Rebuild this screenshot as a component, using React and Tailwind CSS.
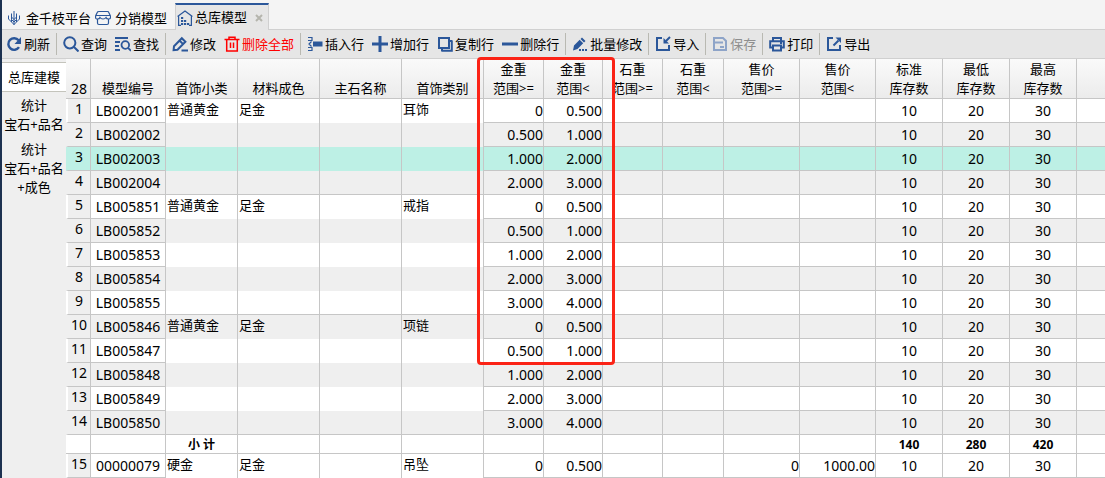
import React from "react";

const BLUE = "#2b579a";

// All icons share a 16px box
const Icon = ({ children, color = BLUE, width = 2 }) => (
  <svg
    viewBox="0 0 16 16"
    className="h-4 w-4 shrink-0"
    fill="none"
    stroke={color}
    strokeWidth={width}
    aria-hidden="true"
  >
    {children}
  </svg>
);

const BranchIcon = () => (
  <Icon width={1}>
    <path d="M8 1v14M5.500 3.500v3.500L8 9.500 10.500 7v-3.500M5.500 7v2.500L8 12l2.500-2.500V7M2.500 5.500V9l3 3M13.500 5.500V9l-3 3M5.500 9.500V12L8 14.500l2.500-2.500V9.500" />
  </Icon>
);

const ShopIcon = () => (
  <Icon width={1.2}>
    <path d="M4 1.500h8.500q1 0 1.300 1L15.500 6v1.500q0 1.500-2 1.500t-2.500-1.500Q10 9 8 9T5 7.500Q4.500 9 2.500 9T.6 7.500V6l1.600-3.500q.3-1 1.800-1zM1 5.500h14M2.500 9v4q0 1.500 1.500 1.500h8q1.500 0 1.500-1.500V9" />
  </Icon>
);

const WarehouseIcon = () => (
  <Icon width={1.2}>
    <path d="M.6 6.500 8 1l7.400 5.500M1.600 6v9.400H4M14.400 6v9.400H12" />
    <path d="M4 7h2.200v2H4zM4 10h2.200v2H4zM4 13h2.200v2H4zM7 10h2.200v2H7zM7 13h2.200v2H7zM10 13h2.200v2H10z" fill={BLUE} stroke="none" />
  </Icon>
);

const RefreshIcon = () => (
  <Icon width={2.4}>
    <path d="M13 11.200A5.800 5.800 0 1 1 12.600 4.300" />
    <path d="M15 1v7H8.500z" fill={BLUE} stroke="none" />
  </Icon>
);

const SearchIcon = () => (
  <Icon>
    <circle cx="6.800" cy="6.800" r="5.600" />
    <path d="m11 11 4.500 4.500" />
  </Icon>
);

const FindIcon = () => (
  <Icon width={1.800}>
    <path d="M0 2h13M0 6h5M0 10h4M0 14h5" />
    <circle cx="10.300" cy="9" r="3.800" />
    <path d="m13 11.800 3 3" />
  </Icon>
);

const EditIcon = () => (
  <Icon width={2}>
    <path d="M1.600 14.200 2 10.200 9.800 2.200l3.600 3.600-7.900 7.900zM7.500 4.500l3.600 3.600M9.500 14.600H16" />
  </Icon>
);

const TrashIcon = () => (
  <Icon color="#ff0000" width={1.500}>
    <path d="M.5 3.500h15M5 3.500V1.200h6v2.300M2.700 3.500v11.500h10.600V3.500M6.500 6.500v5.500M9.500 6.500v5.500" />
  </Icon>
);

const InsertIcon = () => (
  <Icon width={1.200}>
    <path d="M1 1.500h4v3H1M1 14.500h4v-3H1M4.500 5.500 2 8l2.500 2.500" />
    <path d="M6 5.500h9.500v5H6z" fill={BLUE} stroke="none" />
  </Icon>
);

const PlusIcon = () => (
  <Icon width={3}>
    <path d="M8 0v16M0 8h16" />
  </Icon>
);

const CopyIcon = () => (
  <Icon width={2}>
    <path d="M2 2h10v10H2zM14.800 5v9.800H5M12 5h3.500M5 12v3.500" />
  </Icon>
);

const MinusIcon = () => (
  <Icon width={3}>
    <path d="M0 8h16" />
  </Icon>
);

const BatchIcon = () => (
  <Icon>
    <path d="M10 1.500 13.500 5 12 6.500 8.500 3zM7.700 3.800l3.500 3.500L5.500 13 1 14.500l1-5z" fill={BLUE} stroke="none" />
    <path d="M7 14h9" strokeDasharray="2 1" />
  </Icon>
);

const ImportIcon = () => (
  <Icon width={2}>
    <path d="M7 2H2v12h12V9" />
    <path d="m15 1-4 4" />
    <path d="M8.500 2v5.500H14z" fill={BLUE} stroke="none" />
  </Icon>
);

const SaveIcon = () => (
  <Icon color="#8ea4c8" width={2}>
    <path d="M2 2h9l3 3v9H2zM2 6.500h9" />
    <path d="M8 10h4v2H8z" fill="#8ea4c8" stroke="none" />
  </Icon>
);

const PrintIcon = () => (
  <Icon width={2}>
    <path d="M4 5V2h8v3M4 11.500H1.200V5.200h13.600v6.300H12M4 9.500h8v5H4z" />
    <path d="M11 7h2" />
  </Icon>
);

const ExportIcon = () => (
  <Icon width={2}>
    <path d="M7 2H2v12h12V9" />
    <path d="m7.500 9.500 5-5" />
    <path d="M9.500 1.500H15V7z" fill={BLUE} stroke="none" />
  </Icon>
);

// Toolbar buttons, a separator is drawn between groups
const toolbar = [
  [{ label: "刷新", icon: RefreshIcon }],
  [
    { label: "查询", icon: SearchIcon },
    { label: "查找", icon: FindIcon },
  ],
  [
    { label: "修改", icon: EditIcon },
    { label: "删除全部", icon: TrashIcon, danger: true },
  ],
  [
    { label: "插入行", icon: InsertIcon },
    { label: "增加行", icon: PlusIcon },
    { label: "复制行", icon: CopyIcon },
    { label: "删除行", icon: MinusIcon },
  ],
  [{ label: "批量修改", icon: BatchIcon }],
  [{ label: "导入", icon: ImportIcon }],
  [{ label: "保存", icon: SaveIcon, disabled: true }],
  [{ label: "打印", icon: PrintIcon }],
  [{ label: "导出", icon: ExportIcon }],
];

const columns = [
  { lines: ["28"], col: "w-[25px]" },
  { lines: ["模型编号"], col: "w-[75px]" },
  { lines: ["首饰小类"], col: "w-[72px]" },
  { lines: ["材料成色"], col: "w-[82px]" },
  { lines: ["主石名称"], col: "w-[82px]" },
  { lines: ["首饰类别"], col: "w-[82px]" },
  { lines: ["金重", "范围>="], col: "w-[60px]" },
  { lines: ["金重", "范围<"], col: "w-[59px]" },
  { lines: ["石重", "范围>="], col: "w-[60px]" },
  { lines: ["石重", "范围<"], col: "w-[61px]" },
  { lines: ["售价", "范围>="], col: "w-[76px]" },
  { lines: ["售价", "范围<"], col: "w-[76px]" },
  { lines: ["标准", "库存数"], col: "w-[67px]" },
  { lines: ["最低", "库存数"], col: "w-[67px]" },
  { lines: ["最高", "库存数"], col: "w-[67px]" },
  { lines: [""], col: "" },
];

// group: [首饰小类, 材料成色, 主石名称, 首饰类别], end: last row of its group
const rows = [
  { no: 1, code: "LB002001", group: ["普通黄金", "足金", "", "耳饰"], from: "0", to: "0.500" },
  { no: 2, code: "LB002002", from: "0.500", to: "1.000" },
  { no: 3, code: "LB002003", from: "1.000", to: "2.000", selected: true },
  { no: 4, code: "LB002004", from: "2.000", to: "3.000", end: true },
  { no: 5, code: "LB005851", group: ["普通黄金", "足金", "", "戒指"], from: "0", to: "0.500" },
  { no: 6, code: "LB005852", from: "0.500", to: "1.000" },
  { no: 7, code: "LB005853", from: "1.000", to: "2.000" },
  { no: 8, code: "LB005854", from: "2.000", to: "3.000" },
  { no: 9, code: "LB005855", from: "3.000", to: "4.000", end: true },
  { no: 10, code: "LB005846", group: ["普通黄金", "足金", "", "项链"], from: "0", to: "0.500" },
  { no: 11, code: "LB005847", from: "0.500", to: "1.000" },
  { no: 12, code: "LB005848", from: "1.000", to: "2.000" },
  { no: 13, code: "LB005849", from: "2.000", to: "3.000" },
  { no: 14, code: "LB005850", from: "3.000", to: "4.000", end: true },
  { subtotal: true, totals: ["140", "280", "420"] },
  { no: 15, code: "00000079", group: ["硬金", "足金", "", "吊坠"], from: "0", to: "0.500", priceFrom: "0", priceTo: "1000.00" },
];

const Tabs = () => (
  <nav className="flex h-[30px] items-end border-b border-[#d0d0d0] bg-[#f4f4f4] pl-1">
    <a href="#platform" className="flex h-[22px] items-center gap-1 pr-1">
      <BranchIcon />
      金千枝平台
    </a>
    <a href="#distribution" className="flex h-[22px] items-center gap-1">
      <ShopIcon />
      分销模型
    </a>
    <div className="-mb-px ml-2 flex h-[27px] items-center border-x border-t-2 border-x-[#d0d0d0] border-t-[#2b579a] bg-[#e6e6e6] px-px">
      <a href="#models" className="flex items-center gap-0.5" aria-current="page">
        <WarehouseIcon />
        总库模型
      </a>
      <button type="button" aria-label="关闭" className="ml-1 flex h-4 w-4 items-center justify-center">
        <svg viewBox="0 0 8 8" className="h-2 w-2" stroke="#b5b5ad" strokeWidth="2">
          <path d="m1 1 6 6M7 1 1 7" />
        </svg>
      </button>
    </div>
  </nav>
);

const Toolbar = () => (
  <div className="flex h-[29px] items-center border-b border-[#d0d0d0] bg-[#e6e6e6]">
    {toolbar.map((group, i) => (
      <div
        key={i}
        className={`flex h-[22px] items-center gap-2 pr-1.5 ${i === 0 ? "pl-1" : "border-l border-[#b9b9b2] pl-1.5"}`}
      >
        {group.map(({ label, icon: ItemIcon, danger, disabled }) => (
          <button
            key={label}
            type="button"
            disabled={disabled}
            className={`flex shrink-0 items-center gap-0.5 whitespace-nowrap ${
              danger ? "text-[#ff0000]" : disabled ? "text-[#8f8f8f]" : ""
            }`}
          >
            <ItemIcon />
            {label}
          </button>
        ))}
      </div>
    ))}
  </div>
);

const Sidebar = () => (
  <aside className="w-16 shrink-0 pt-[3px] text-center leading-[19px]">
    <a href="#build" className="flex h-[30px] items-center justify-center border-y border-[#c4c4bc] bg-white">
      总库建模
    </a>
    <a href="#by-name" className="block whitespace-nowrap pt-1">
      统计
      <br />
      宝石+品名
    </a>
    <a href="#by-quality" className="block whitespace-nowrap pt-1.5">
      统计
      <br />
      宝石+品名
      <br />
      +成色
    </a>
  </aside>
);

const line = "border-r border-b border-[#c6c6c6]";
const cell = "border-r border-b border-[#c6c6c6] text-sm/[19px]";

const Row = ({ row }) => {
  const { no, code, from, to, group, end, selected, subtotal, totals, priceFrom, priceTo } = row;

  if (subtotal) {
    return (
      <tr className="h-[19px] bg-white text-xs/[17px] font-bold">
        <td className={line}></td>
        <td className={line}></td>
        <td className={`${line} pt-px text-center`}>小 计</td>
        {[...Array(9)].map((_, i) => (
          <td key={i} className={line}></td>
        ))}
        {totals.map((total) => (
          <td key={total} className={`${line} pt-px text-center`}>{total}</td>
        ))}
        <td className="border-b border-[#c6c6c6]"></td>
      </tr>
    );
  }

  const bg = selected ? "bg-[#bdf0e5]" : no % 2 ? "bg-white" : "bg-[#efefef]";
  const edge = selected ? "border-l-[#bdf0e5]" : no % 2 ? "border-l-white bg-[#efefef]" : "border-l-[#efefef]";

  return (
    <tr className={`h-6 ${bg}`}>
      <th scope="row" className={`${line} border-l-2 ${edge} pb-1 text-center text-sm/[19px] font-normal`}>
        {no}
      </th>
      <td className={`${cell} text-center`}>{code}</td>
      {[0, 1, 2, 3].map((i) => (
        <td key={i} className={`border-r border-[#c6c6c6] ${end ? "border-b" : ""} whitespace-nowrap pb-1 pl-px`}>
          {group ? group[i] : ""}
        </td>
      ))}
      <td className={`${cell} text-right`}>{from}</td>
      <td className={`${cell} text-right`}>{to}</td>
      <td className={cell}></td>
      <td className={cell}></td>
      <td className={`${cell} text-right`}>{priceFrom}</td>
      <td className={`${cell} text-right`}>{priceTo}</td>
      <td className={`${cell} text-center`}>10</td>
      <td className={`${cell} text-center`}>20</td>
      <td className={`${cell} text-center`}>30</td>
      <td className="border-b border-[#c6c6c6]"></td>
    </tr>
  );
};

const ModelTable = () => (
  <div className="relative min-w-0 flex-1">
    <table className="w-full table-fixed border-separate border-spacing-0 leading-[19px]">
      <colgroup>
        {columns.map((column, i) => (
          <col key={i} className={column.col} />
        ))}
      </colgroup>
      <thead>
        <tr className="h-10 bg-linear-to-b from-[#fafafa] to-[#ebebeb]">
          {columns.map((column, i) => (
            <th
              key={i}
              scope="col"
              className={`border-r border-b border-[#c6c6c6] whitespace-nowrap pt-px text-center align-bottom font-normal last:border-r-0 ${
                i === 0 ? "pl-0.5 text-sm/[19px]" : ""
              }`}
            >
              {column.lines.map((text, j) => (
                <span key={j} className="block">{text}</span>
              ))}
            </th>
          ))}
        </tr>
      </thead>
      <tbody>
        {rows.map((row, i) => (
          <Row key={i} row={row} />
        ))}
      </tbody>
    </table>

    {/* Marks the gold weight range */}
    <div className="pointer-events-none absolute -top-0.5 left-[411px] h-[308px] w-[138px] rounded border-3 border-[#fb2316]"></div>
  </div>
);

export default function App() {
  return (
    <div className="min-h-screen border-l-2 border-[#1c3150] bg-[#efefef] font-['Noto_Sans','Noto_Sans_CJK_SC',sans-serif] text-[13px] leading-[19px] text-black">
      <Tabs />
      <Toolbar />
      <main className="flex">
        <Sidebar />
        <ModelTable />
      </main>
    </div>
  );
}
